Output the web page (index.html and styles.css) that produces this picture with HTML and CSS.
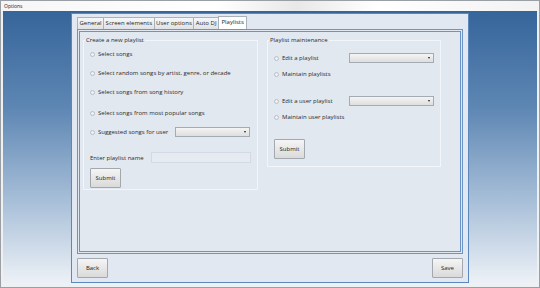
FILE: index.html
```html
<!DOCTYPE html>
<html lang="en">
  <head>
    <meta charset="utf-8">
    <title>Options</title>
    <link rel="stylesheet" href="styles.css">
  </head>
  <body>
<div class="window">
  <div class="titlebar">Options</div>
  <div class="frame">
    <div class="dialog">
      <div class="tabs">
        <div class="tab">General</div>
        <div class="tab">Screen elements</div>
        <div class="tab">User options</div>
        <div class="tab">Auto DJ</div>
        <div class="tab active">Playlists</div>
      </div>
      <div class="tabPanel">
        <fieldset class="group leftGroup">
          <legend>Create a new playlist</legend>
          <div class="row first"><span class="radio"></span>Select songs</div>
          <div class="row"><span class="radio"></span>Select random songs by artist, genre, or decade</div>
          <div class="row"><span class="radio"></span>Select songs from song history</div>
          <div class="row tall"><span class="radio"></span>Select songs from most popular songs</div>
          <div class="row">
            <span class="radio"></span><span class="label suggest">Suggested songs for user</span>
            <div class="select"><span class="arrow"></span></div>
          </div>
          <div class="nameRow">
            <span class="label nameLabel">Enter playlist name</span>
            <div class="textbox"></div>
          </div>
          <button class="btn">Submit</button>
        </fieldset>
        <fieldset class="group rightGroup">
          <legend>Playlist maintenance</legend>
          <div class="row first2">
            <span class="radio"></span><span class="label editLabel">Edit a playlist</span>
            <div class="select"><span class="arrow"></span></div>
          </div>
          <div class="row close"><span class="radio"></span>Maintain playlists</div>
          <div class="row gapped">
            <span class="radio"></span><span class="label editLabel">Edit a user playlist</span>
            <div class="select"><span class="arrow"></span></div>
          </div>
          <div class="row close"><span class="radio"></span>Maintain user playlists</div>
          <button class="btn rightSubmit">Submit</button>
        </fieldset>
      </div>
      <div class="footer">
        <button class="btn">Back</button>
        <button class="btn">Save</button>
      </div>
    </div>
  </div>
</div>
  </body>
</html>
```

FILE: styles.css
```css
* {
  margin: 0px;
  padding: 0px;
  box-sizing: border-box;
  font-family: 'Open Sans', sans-serif;
}
body {
  width: 540px;
  height: 288px;
  background-color: #ffffff;
  overflow: hidden;
}
.window {
  width: 540px;
  height: 288px;
  border: 1px solid #9a9fa6;
  background: #eef0f2;
  display: flex;
  flex-direction: column;
}
.titlebar {
  height: 10px;
  font-size: 5px;
  line-height: 10px;
  padding-left: 3px;
  color: #222;
  background: linear-gradient(100deg, #f6f6f6 0%, #ffffff 40%, #e8e8e8 55%, #ffffff 70%, #f2f2f2 100%);
}
.frame {
  flex: 1;
  margin: 0px 2px 4px 2px;
  padding: 2px 68px 2px 68px;
  background: linear-gradient(to bottom, #36659b 0%, #5d86b3 35%, #a9c0d9 70%, #eef2f7 100%);
  display: flex;
}
.dialog {
  flex: 1;
  border: 1px solid #5b87ba;
  background-color: #e1e8f1;
  padding: 2px 5px 4px 5px;
  display: flex;
  flex-direction: column;
}
.tabs {
  display: flex;
  height: 13px;
  align-items: flex-end;
}
.tab {
  height: 12px;
  font-size: 6px;
  line-height: 11px;
  padding: 0px 1.5px;
  color: #1e1e1e;
  border: 1px solid #a9b1bb;
  border-bottom: none;
  margin-right: -1px;
  background: linear-gradient(to bottom, #f6f7f8, #dfe2e6);
}
.tab.active {
  height: 13px;
  background: #ffffff;
  padding: 0px 2.5px;
  position: relative;
  z-index: 1;
}
.tabPanel {
  height: 225px;
  border: 3px double #6b93c4;
  background-color: #e2e8f0;
  display: flex;
  gap: 9px;
  padding: 4px 3px;
}
.group {
  border: 1px solid #f2f5f9;
  width: 174px;
  padding: 0px 6px;
  align-self: flex-start;
}
.group legend {
  font-size: 6px;
  color: #2a2a2a;
  padding: 0px 1px;
  margin-left: -5px;
}
.leftGroup {
  height: 154px;
}
.rightGroup {
  width: 172px;
  height: 131px;
}
.row {
  display: flex;
  align-items: center;
  height: 10px;
  font-size: 6px;
  color: #2a2a2a;
  margin-top: 9px;
}
.row.first {
  margin-top: 5px;
}
.row.tall {
  margin-top: 11px;
}
.row.first2 {
  margin-top: 9px;
}
.row.close {
  margin-top: 6px;
}
.row.gapped {
  margin-top: 17px;
}
.radio {
  width: 5px;
  height: 5px;
  border: 1px solid #b8bec7;
  border-radius: 50%;
  background: #eef1f4;
  margin-right: 3px;
  flex-shrink: 0;
}
.label {
  display: inline-block;
}
.suggest {
  width: 77px;
}
.editLabel {
  width: 67px;
}
.select {
  width: 75px;
  height: 10px;
  border: 1px solid #a4abb4;
  background: linear-gradient(to bottom, #f4f4f4, #dedede);
  position: relative;
}
.rightGroup .select {
  width: 85px;
}
.arrow {
  position: absolute;
  right: 3px;
  top: 3px;
  border-left: 1.5px solid transparent;
  border-right: 1.5px solid transparent;
  border-top: 2px solid #222;
}
.nameRow {
  display: flex;
  align-items: center;
  margin-top: 15px;
  font-size: 6px;
  color: #2a2a2a;
}
.nameLabel {
  width: 61px;
}
.textbox {
  width: 100px;
  height: 11px;
  border: 1px solid #d3dae3;
  background: #e6ebf2;
}
.btn {
  width: 31px;
  height: 20px;
  font-size: 6px;
  color: #222;
  border: 1px solid #a3a8ae;
  border-radius: 1px;
  background: linear-gradient(to bottom, #f5f5f5, #dadada);
  cursor: pointer;
}
.leftGroup .btn {
  margin-top: 3px;
}
.rightSubmit {
  margin-top: 17px;
}
.footer {
  display: flex;
  justify-content: space-between;
  margin-top: 4px;
}
```
